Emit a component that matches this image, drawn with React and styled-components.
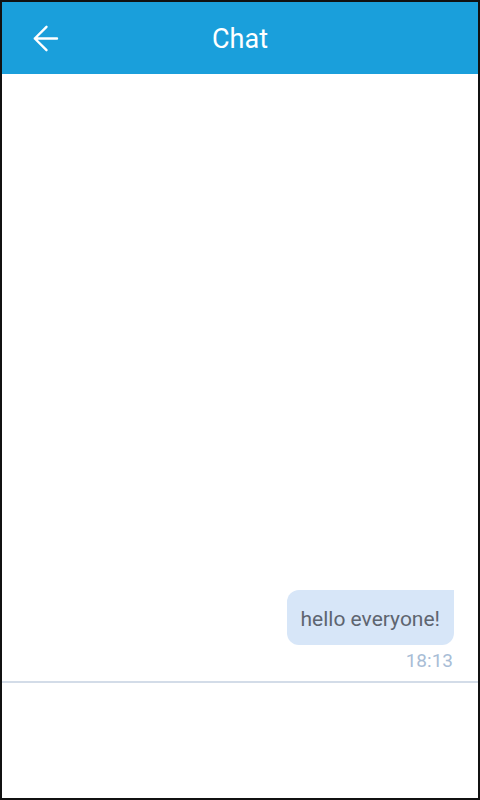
import React from "react";
import styled, { createGlobalStyle } from "styled-components";

const GlobalStyle = createGlobalStyle`
    html, body {
        margin: 0;
        padding: 0;
        background: #111111;
    }
    * {
        box-sizing: border-box;
    }
`;

const messages = [{ id: 1, text: "hello everyone!", time: "18:13" }];

export default function App() {
    return (
        <>
            <GlobalStyle />
            <Screen>
                <Header>
                    <BackButton aria-label="Back">
                        <svg width="28" height="30" viewBox="0 0 28 30" fill="none">
                            <path
                                d="M25 14.5H2.8M14.5 2.8L2.8 14.5l11.7 11.7"
                                stroke="#ffffff"
                                strokeWidth="2.4"
                                strokeLinecap="round"
                                strokeLinejoin="round"
                            />
                        </svg>
                    </BackButton>
                    <Title>Chat</Title>
                </Header>
                <MessageList>
                    {messages.map((m) => (
                        <MessageGroup key={m.id}>
                            <Bubble>{m.text}</Bubble>
                            <Time>{m.time}</Time>
                        </MessageGroup>
                    ))}
                </MessageList>
                <Composer />
            </Screen>
        </>
    );
}

const Screen = styled.div`
    width: 480px;
    height: 800px;
    border: 2px solid #111111;
    display: flex;
    flex-direction: column;
    background: #ffffff;
    font-family: Roboto, "Noto Sans", sans-serif;
`;

const Header = styled.header`
    height: 72px;
    flex-shrink: 0;
    background: #1a9fdb;
    display: flex;
    align-items: center;
    justify-content: center;
    position: relative;
`;

const BackButton = styled.button`
    position: absolute;
    left: 30px;
    top: 22px;
    background: none;
    border: none;
    padding: 0;
    display: flex;
    cursor: pointer;
`;

const Title = styled.h1`
    margin: 0;
    color: #ffffff;
    font-size: 27px;
    font-weight: 400;
    line-height: 1;
    padding-top: 3px;
`;

const MessageList = styled.div`
    flex: 1;
    display: flex;
    flex-direction: column;
    justify-content: flex-end;
    padding: 0 24px 9px 24px;
`;

const MessageGroup = styled.div`
    display: flex;
    flex-direction: column;
    align-items: flex-end;
    gap: 4px;
`;

const Bubble = styled.div`
    background: #d7e6f8;
    color: #5e6570;
    font-size: 21px;
    line-height: 23px;
    padding: 18px 14px 14px;
    border-radius: 12px 0 12px 12px;
`;

const Time = styled.span`
    color: #a8bdd6;
    font-size: 19px;
    line-height: 23px;
    padding-right: 1px;
`;

const Composer = styled.div`
    height: 117px;
    flex-shrink: 0;
    border-top: 2px solid #d3dce8;
    background: #ffffff;
`;
